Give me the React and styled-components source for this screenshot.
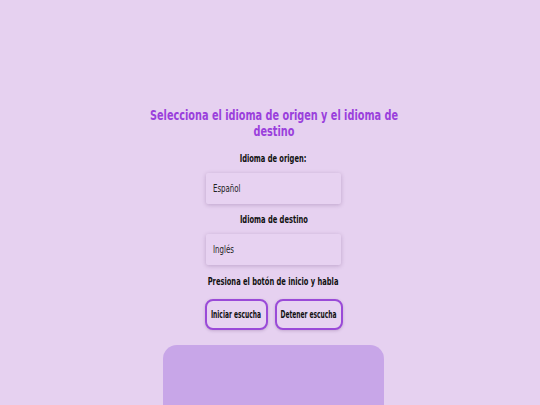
import React from "react";
import styled, { createGlobalStyle } from "styled-components";

const Global = createGlobalStyle`
  html, body { margin: 0; padding: 0; background: #e6d1f0; }
  body { font-family: "DejaVu Sans Condensed", "DejaVu Sans", sans-serif; overflow: hidden; }
`;

const Page = styled.div`
  height: 405px;
  box-sizing: border-box;
  padding: 107px 0 0 7px;
  display: flex;
  flex-direction: column;
  align-items: center;
  overflow: hidden;
  & > * { flex-shrink: 0; }
`;

const Title = styled.h1`
  margin: 0;
  width: 310px;
  text-align: center;
  font-size: 13.5px;
  line-height: 16px;
  font-weight: bold;
  color: #9a3fdc;
  transform: scaleX(0.8);
`;

const Narrow = styled.span`
  display: inline-block;
  white-space: nowrap;
  transform: scaleX(${(p) => p.$scale || 0.78});
  transform-origin: ${(p) => p.$origin || "center"};
`;

const Label = styled.div`
  margin-top: ${(p) => p.$mt}px;
  font-size: 10.5px;
  line-height: 12px;
  font-weight: bold;
  color: #111;
`;

const Field = styled.div`
  margin-top: 9px;
  width: 135px;
  height: 31px;
  box-sizing: border-box;
  padding: 0 7px;
  display: flex;
  align-items: center;
  background: #e7d2f1;
  box-shadow: 0 1px 4px rgba(90, 50, 110, 0.28);
  border-radius: 2px;
  font-size: 10px;
  color: #222;
`;

const Buttons = styled.div`
  margin-top: 12px;
  display: flex;
  gap: 7px;
`;

const Button = styled.button`
  height: 31px;
  width: ${(p) => p.$w}px;
  box-sizing: border-box;
  border: 2px solid #9a4ad8;
  border-radius: 8px;
  background: #e7d3f1;
  font-family: inherit;
  font-size: 10px;
  font-weight: bold;
  color: #111;
  padding: 0;
  display: flex;
  align-items: center;
  justify-content: center;
  box-shadow: 0 1px 3px rgba(90, 50, 110, 0.25);
`;

const Panel = styled.div`
  margin-top: 15px;
  width: 221px;
  height: 60px;
  background: #c8a6e8;
  border-radius: 14px 14px 0 0;
`;

export default function App() {
  return (
    <>
      <Global />
      <Page>
        <Title>Selecciona el idioma de origen y el idioma de destino</Title>
        <Label $mt={13}><Narrow $scale={0.71}>Idioma de origen:</Narrow></Label>
        <Field><Narrow $origin="left">Español</Narrow></Field>
        <Label $mt={9}><Narrow $scale={0.71}>Idioma de destino</Narrow></Label>
        <Field><Narrow $origin="left">Inglés</Narrow></Field>
        <Label $mt={10}><Narrow $scale={0.71}>Presiona el botón de inicio y habla</Narrow></Label>
        <Buttons>
          <Button $w={63}><Narrow $scale={0.66}>Iniciar escucha</Narrow></Button>
          <Button $w={68}><Narrow $scale={0.66}>Detener escucha</Narrow></Button>
        </Buttons>
        <Panel />
      </Page>
    </>
  );
}
